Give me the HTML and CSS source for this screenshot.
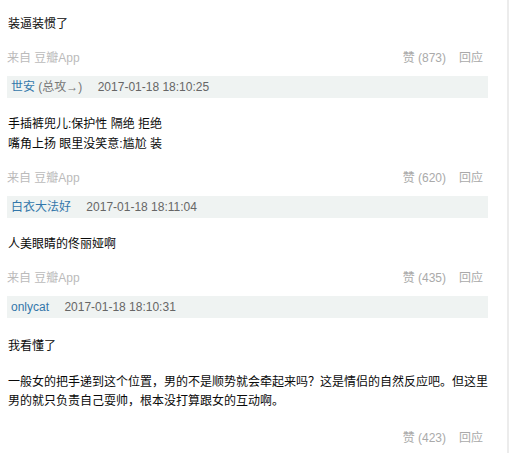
FILE: index.html
```html
<!DOCTYPE html>
<html lang="zh-CN">
<head>
    <meta charset="UTF-8">
    <title>回应</title>
    <link rel="stylesheet" href="styles.css">
</head>
<body>
    <div class="page">
        <div class="comments">
            <div class="reply first">
                <div class="reply-body">装逼装惯了</div>
                <div class="reply-meta">
                    <span class="from">来自 <a href="#">豆瓣App</a></span>
                    <span class="actions"><a href="#">赞 (873)</a><a href="#">回应</a></span>
                </div>
            </div>

            <div class="reply">
                <div class="reply-head">
                    <a class="name" href="#">世安</a><span class="sign"> (总攻→)</span>
                    <span class="time">2017-01-18 18:10:25</span>
                </div>
                <div class="reply-body">手插裤兜儿:保护性 隔绝 拒绝<br>嘴角上扬 眼里没笑意:尴尬 装</div>
                <div class="reply-meta">
                    <span class="from">来自 <a href="#">豆瓣App</a></span>
                    <span class="actions"><a href="#">赞 (620)</a><a href="#">回应</a></span>
                </div>
            </div>

            <div class="reply">
                <div class="reply-head">
                    <a class="name" href="#">白衣大法好</a>
                    <span class="time">2017-01-18 18:11:04</span>
                </div>
                <div class="reply-body">人美眼睛的佟丽娅啊</div>
                <div class="reply-meta">
                    <span class="from">来自 <a href="#">豆瓣App</a></span>
                    <span class="actions"><a href="#">赞 (435)</a><a href="#">回应</a></span>
                </div>
            </div>

            <div class="reply last">
                <div class="reply-head">
                    <a class="name" href="#">onlycat</a>
                    <span class="time">2017-01-18 18:10:31</span>
                </div>
                <div class="reply-body">
                    <p>我看懂了</p>
                    <p class="long">一般女的把手递到这个位置，男的不是顺势就会牵起来吗？这是情侣的自然反应吧。但这里<br>男的就只负责自己耍帅，根本没打算跟女的互动啊。</p>
                </div>
                <div class="reply-meta">
                    <span class="from"></span>
                    <span class="actions"><a href="#">赞 (423)</a><a href="#">回应</a></span>
                </div>
            </div>
        </div>
        <div class="rule"></div>
    </div>
</body>
</html>
```

FILE: styles.css
```css
/* 基本样式 */
body {
    margin: 0;
    font-family: "Liberation Sans", "Noto Sans CJK SC", sans-serif;
    font-size: 12px;
    color: #111;
    background: #fff;
}

a {
    text-decoration: none;
    color: inherit;
}

.page {
    display: flex;
    min-height: 100vh;
}

.comments {
    width: 481px;
    margin-left: 7px;
    padding-top: 14px;
}

.rule {
    width: 2px;
    margin-left: 19px;
    background: #ececec;
}

/* 回应 */
.reply {
    margin-bottom: 8px;
}

.reply.last {
    margin-bottom: 0;
}

.reply-head {
    height: 22px;
    line-height: 22px;
    padding-left: 4px;
    background: #eff3f2;
    margin-bottom: 16px;
    white-space: nowrap;
}

.reply.last .reply-head {
    margin-bottom: 18px;
}

.reply-head .name {
    color: #37a;
}

.reply-head .sign {
    color: #777;
}

.reply-head .time {
    color: #666;
    margin-left: 12px;
}

.reply-body {
    font-size: 12px;
    line-height: 20px;
    padding-left: 1px;
    color: #0a0a0a;
}

.reply-body p {
    margin: 0;
}

.reply-body .long {
    margin-top: 17px;
    line-height: 19px;
    white-space: nowrap;
}

.reply-meta {
    display: flex;
    justify-content: space-between;
    margin-top: 14px;
    line-height: 20px;
}

.reply.last .reply-meta {
    margin-top: 17px;
}

.from {
    color: #bbb;
}

.actions {
    display: flex;
    gap: 13px;
    padding-right: 5px;
    color: #aaa;
}
```
